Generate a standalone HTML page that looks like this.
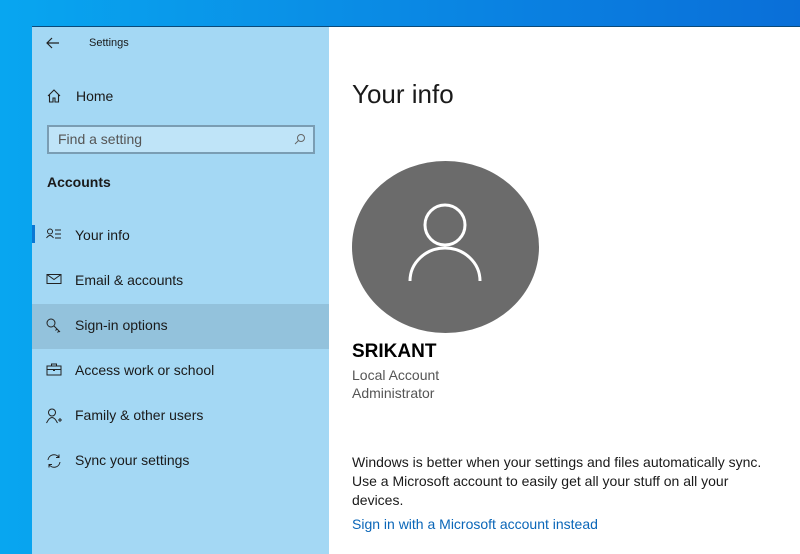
<!DOCTYPE html>
<html><head><meta charset="utf-8"><style>
*{margin:0;padding:0;box-sizing:border-box}
body{width:800px;height:554px;overflow:hidden;position:relative;font-family:"Liberation Sans",sans-serif;background:linear-gradient(90deg,#08a6f0 0%,#0a8fe6 40%,#0a7ee0 70%,#0a6fd8 100%)}
.win{position:absolute;left:32px;top:26px;width:768px;height:528px;border-top:1px solid #0a4a7a}
.side{position:absolute;left:0;top:0;width:297px;height:100%;background:#a4d8f4;color:#1a1a1a}
.main{position:absolute;left:297px;top:0;right:0;height:100%;background:#fff;color:#1a1a1a}
.t{position:absolute;white-space:nowrap}
.item{position:absolute;left:0;width:297px;height:45px;font-size:14px}
.item span{position:absolute;left:43px;top:13px}
.item svg{position:absolute;left:14px;top:14px}
</style></head><body>
<div class="win">
<div class="side">
 <svg class="t" style="left:14px;top:10px" width="14" height="12" viewBox="0 0 14 12"><path d="M13 6H1M6 1L1 6l5 5" stroke="#222" stroke-width="1.2" fill="none"/></svg>
 <div class="t" style="left:57px;top:10px;font-size:11px">Settings</div>
 <svg class="t" style="left:15px;top:62px" width="14" height="14" viewBox="0 0 14 14"><path d="M1 7L7 1l6 6M2.5 5.5V13h3.5V9h2v4h3.5V5.5" stroke="#222" stroke-width="1.1" fill="none"/></svg>
 <div class="t" style="left:44px;top:61px;font-size:14px">Home</div>
 <div class="t" style="left:15px;top:98px;width:268px;height:29px;border:2px solid #7a9db3;background:#bfe4f8"></div>
 <div class="t" style="left:26px;top:104px;font-size:14px;color:#555">Find a setting</div>
 <svg class="t" style="left:262px;top:106px" width="12" height="12" viewBox="0 0 12 12"><circle cx="7" cy="5" r="3.5" stroke="#666" fill="none"/><path d="M4.5 7.5L1 11" stroke="#666"/></svg>
 <div class="t" style="left:15px;top:147px;font-size:14px;font-weight:bold">Accounts</div>
 <div class="t" style="left:0;top:198px;width:3px;height:18px;background:#0a78d4"></div>
 <div class="item" style="top:187px"><svg width="16" height="12" viewBox="0 0 16 12"><circle cx="4" cy="3.5" r="2.5" stroke="#222" fill="none"/><path d="M0.5 10q3.5-5 7 0M9 2h6M9 6h6M9 10h6" stroke="#222" fill="none"/></svg><span>Your info</span></div>
 <div class="item" style="top:232px"><svg width="16" height="12" viewBox="0 0 16 12"><rect x="1" y="1.5" width="14" height="9" stroke="#222" fill="none"/><path d="M1 1.5l7 5 7-5" stroke="#222" fill="none"/></svg><span>Email &amp; accounts</span></div>
 <div class="item" style="top:277px;background:#93c2dc"><svg width="16" height="16" viewBox="0 0 16 16"><circle cx="5" cy="5" r="4" stroke="#222" fill="none"/><path d="M8 8l6 6M11 11l-1.5 1.5M13 13l-1.5 1.5" stroke="#222" fill="none"/></svg><span>Sign-in options</span></div>
 <div class="item" style="top:322px"><svg width="16" height="13" viewBox="0 0 16 13"><rect x="1" y="3" width="14" height="9" stroke="#222" fill="none"/><path d="M5.5 3V1h5v2M1 6.5h14" stroke="#222" fill="none"/><rect x="7" y="6" width="2" height="2" fill="#222"/></svg><span>Access work or school</span></div>
 <div class="item" style="top:367px"><svg width="16" height="16" viewBox="0 0 16 16"><circle cx="6" cy="4.5" r="3.5" stroke="#222" fill="none"/><path d="M0.5 15q5.5-11 11 0M12 12h4M14 10v4" stroke="#222" fill="none"/></svg><span>Family &amp; other users</span></div>
 <div class="item" style="top:412px"><svg width="16" height="16" viewBox="0 0 16 16"><path d="M2 7a6 6 0 0 1 11-2.5M14 9a6 6 0 0 1-11 2.5M13 1.5v3h-3M3 14.5v-3h3" stroke="#222" fill="none"/></svg><span>Sync your settings</span></div>
</div>
<div class="main">
 <div class="t" style="left:23px;top:52px;font-size:26px;font-weight:300">Your info</div>
 <div class="t" style="left:23px;top:134px;width:187px;height:172px;border-radius:50%;background:#6b6b6b"></div>
 <svg class="t" style="left:78px;top:174px" width="76" height="82" viewBox="0 0 76 82"><circle cx="38" cy="24" r="20" stroke="#fff" stroke-width="3" fill="none"/><path d="M3 80a35 33 0 0 1 70 0" stroke="#fff" stroke-width="3" fill="none"/></svg>
 <div class="t" style="left:23px;top:314px;font-size:19px;font-weight:bold;color:#000">SRIKANT</div>
 <div class="t" style="left:23px;top:340px;font-size:14px;color:#555">Local Account</div>
 <div class="t" style="left:23px;top:358px;font-size:14px;color:#555">Administrator</div>
 <div class="t" style="left:23px;top:426px;font-size:14px;line-height:19px">Windows is better when your settings and files automatically sync.<br>Use a Microsoft account to easily get all your stuff on all your<br>devices.</div>
 <div class="t" style="left:23px;top:489px;font-size:14px;color:#0a66b8">Sign in with a Microsoft account instead</div>
</div>
</div>
</body></html>
